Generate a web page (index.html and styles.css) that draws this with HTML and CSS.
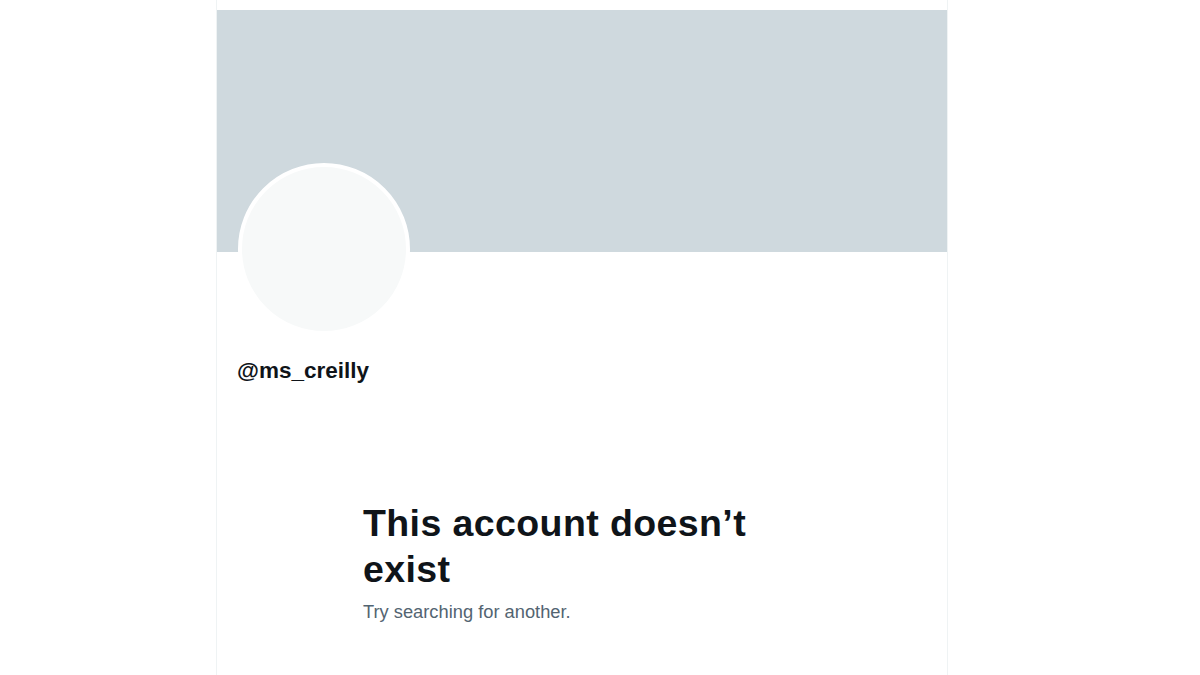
FILE: index.html
```html
<!DOCTYPE html>
<html>
<head>
<meta charset="utf-8">
<link rel="stylesheet" href="styles.css">
</head>
<body>
<div class="column">
  <div class="banner"></div>
  <div class="profile">
    <div class="avatar"></div>
    <div class="handle">@ms_creilly</div>
  </div>
  <div class="empty">
    <h1 class="title">This account doesn’t exist</h1>
    <p class="sub">Try searching for another.</p>
  </div>
</div>
</body>
</html>
```

FILE: styles.css
```css
html, body {
  margin: 0;
  padding: 0;
  background: #ffffff;
}
body {
  font-family: "Liberation Sans", Arial, sans-serif;
  color: #0f1419;
}
.column {
  box-sizing: border-box;
  width: 732px;
  height: 675px;
  margin-left: 216px;
  padding-top: 10px;
  border-left: 1px solid #eff3f4;
  border-right: 1px solid #eff3f4;
}
.banner {
  height: 242px;
  background: #cfd9de;
}
.profile {
  padding: 0 21px;
}
.avatar {
  box-sizing: border-box;
  width: 172px;
  height: 172px;
  margin-top: -89px;
  border-radius: 50%;
  border: 4px solid #ffffff;
  background: #f7f9f9;
}
.handle {
  margin-top: 21px;
  margin-left: -1px;
  font-size: 22.5px;
  line-height: 29px;
  font-weight: bold;
}
.empty {
  width: 438px;
  margin: 115px auto 0 146px;
}
.title {
  margin: 0;
  font-size: 37.5px;
  line-height: 46px;
  font-weight: 800;
  letter-spacing: 0.4px;
}
.sub {
  margin: 8px 0 0;
  font-size: 18.3px;
  line-height: 24px;
  color: #536471;
}
```
